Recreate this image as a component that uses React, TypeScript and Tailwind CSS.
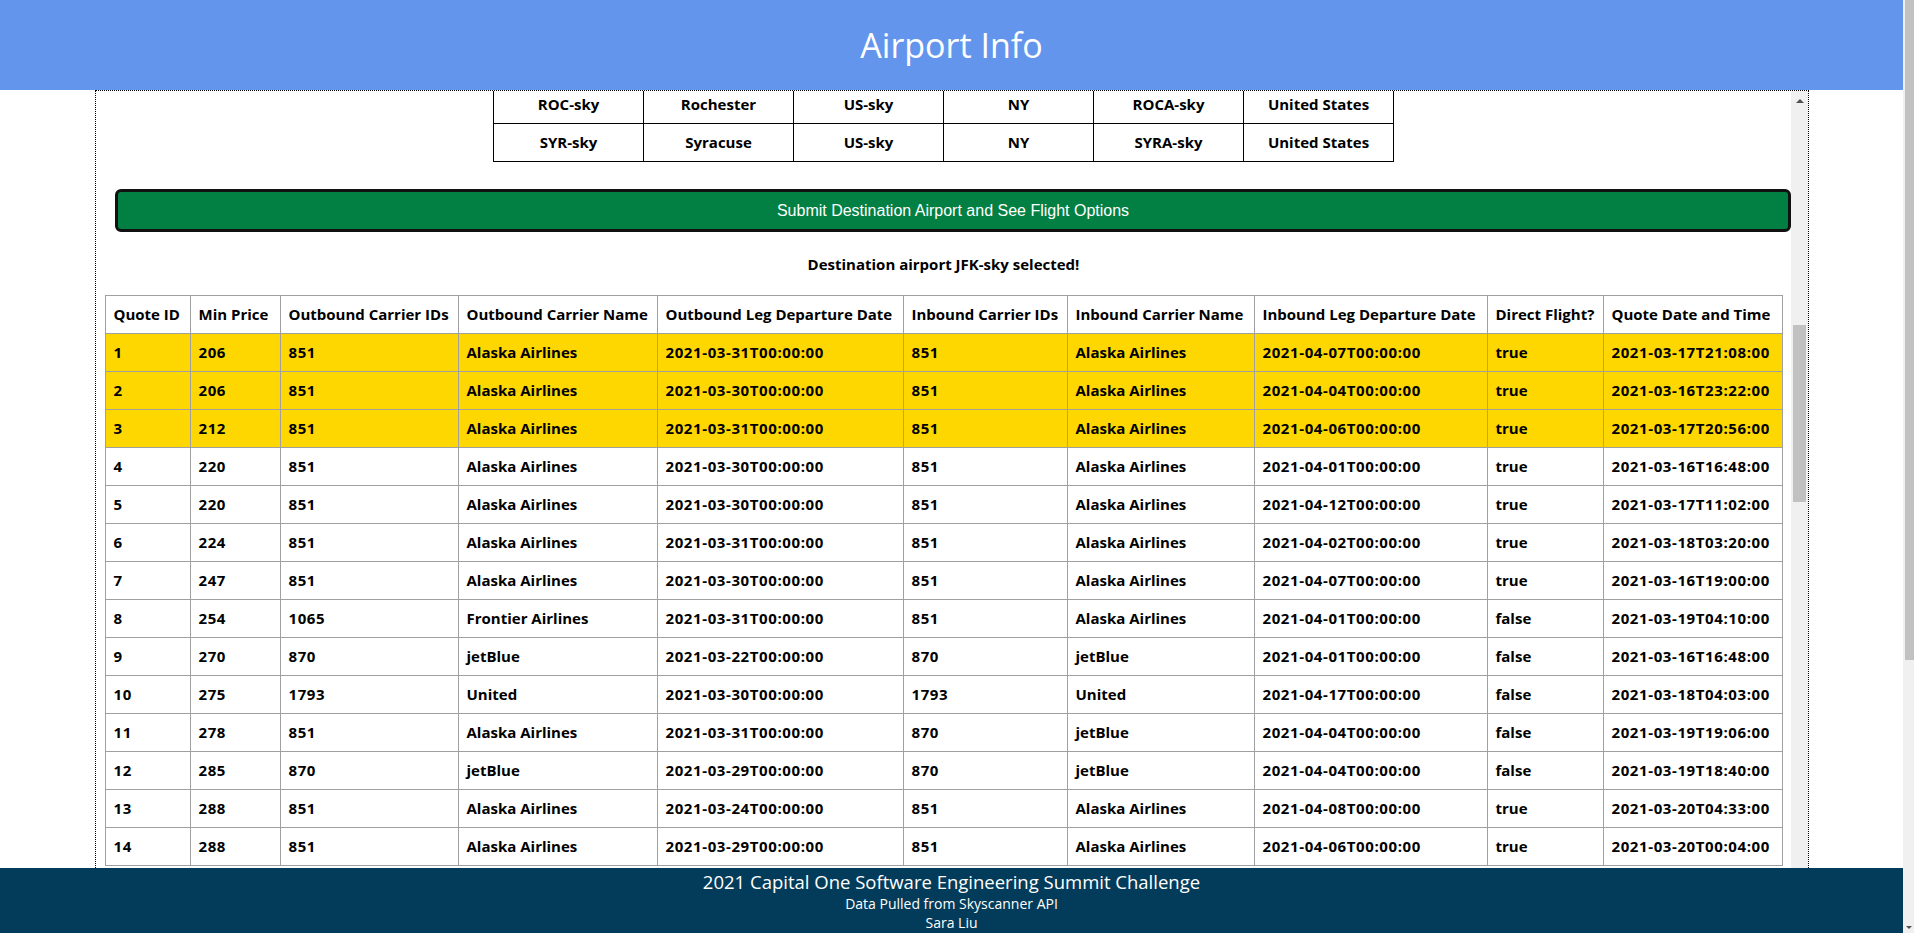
import React from 'react';

type Quote = {
  id: number;
  price: number;
  outIds: string;
  outName: string;
  outDate: string;
  inIds: string;
  inName: string;
  inDate: string;
  direct: boolean;
  quoted: string;
};

const airports = [
  ['ROC-sky', 'Rochester', 'US-sky', 'NY', 'ROCA-sky', 'United States'],
  ['SYR-sky', 'Syracuse', 'US-sky', 'NY', 'SYRA-sky', 'United States'],
];

const headers = [
  'Quote ID',
  'Min Price',
  'Outbound Carrier IDs',
  'Outbound Carrier Name',
  'Outbound Leg Departure Date',
  'Inbound Carrier IDs',
  'Inbound Carrier Name',
  'Inbound Leg Departure Date',
  'Direct Flight?',
  'Quote Date and Time',
];

// column widths measured off the original layout
const colWidths = [85, 90, 178, 199, 246, 164, 187, 233, 116, 179];

const quotes: Quote[] = [
  { id: 1, price: 206, outIds: '851', outName: 'Alaska Airlines', outDate: '2021-03-31T00:00:00', inIds: '851', inName: 'Alaska Airlines', inDate: '2021-04-07T00:00:00', direct: true, quoted: '2021-03-17T21:08:00' },
  { id: 2, price: 206, outIds: '851', outName: 'Alaska Airlines', outDate: '2021-03-30T00:00:00', inIds: '851', inName: 'Alaska Airlines', inDate: '2021-04-04T00:00:00', direct: true, quoted: '2021-03-16T23:22:00' },
  { id: 3, price: 212, outIds: '851', outName: 'Alaska Airlines', outDate: '2021-03-31T00:00:00', inIds: '851', inName: 'Alaska Airlines', inDate: '2021-04-06T00:00:00', direct: true, quoted: '2021-03-17T20:56:00' },
  { id: 4, price: 220, outIds: '851', outName: 'Alaska Airlines', outDate: '2021-03-30T00:00:00', inIds: '851', inName: 'Alaska Airlines', inDate: '2021-04-01T00:00:00', direct: true, quoted: '2021-03-16T16:48:00' },
  { id: 5, price: 220, outIds: '851', outName: 'Alaska Airlines', outDate: '2021-03-30T00:00:00', inIds: '851', inName: 'Alaska Airlines', inDate: '2021-04-12T00:00:00', direct: true, quoted: '2021-03-17T11:02:00' },
  { id: 6, price: 224, outIds: '851', outName: 'Alaska Airlines', outDate: '2021-03-31T00:00:00', inIds: '851', inName: 'Alaska Airlines', inDate: '2021-04-02T00:00:00', direct: true, quoted: '2021-03-18T03:20:00' },
  { id: 7, price: 247, outIds: '851', outName: 'Alaska Airlines', outDate: '2021-03-30T00:00:00', inIds: '851', inName: 'Alaska Airlines', inDate: '2021-04-07T00:00:00', direct: true, quoted: '2021-03-16T19:00:00' },
  { id: 8, price: 254, outIds: '1065', outName: 'Frontier Airlines', outDate: '2021-03-31T00:00:00', inIds: '851', inName: 'Alaska Airlines', inDate: '2021-04-01T00:00:00', direct: false, quoted: '2021-03-19T04:10:00' },
  { id: 9, price: 270, outIds: '870', outName: 'jetBlue', outDate: '2021-03-22T00:00:00', inIds: '870', inName: 'jetBlue', inDate: '2021-04-01T00:00:00', direct: false, quoted: '2021-03-16T16:48:00' },
  { id: 10, price: 275, outIds: '1793', outName: 'United', outDate: '2021-03-30T00:00:00', inIds: '1793', inName: 'United', inDate: '2021-04-17T00:00:00', direct: false, quoted: '2021-03-18T04:03:00' },
  { id: 11, price: 278, outIds: '851', outName: 'Alaska Airlines', outDate: '2021-03-31T00:00:00', inIds: '870', inName: 'jetBlue', inDate: '2021-04-04T00:00:00', direct: false, quoted: '2021-03-19T19:06:00' },
  { id: 12, price: 285, outIds: '870', outName: 'jetBlue', outDate: '2021-03-29T00:00:00', inIds: '870', inName: 'jetBlue', inDate: '2021-04-04T00:00:00', direct: false, quoted: '2021-03-19T18:40:00' },
  { id: 13, price: 288, outIds: '851', outName: 'Alaska Airlines', outDate: '2021-03-24T00:00:00', inIds: '851', inName: 'Alaska Airlines', inDate: '2021-04-08T00:00:00', direct: true, quoted: '2021-03-20T04:33:00' },
  { id: 14, price: 288, outIds: '851', outName: 'Alaska Airlines', outDate: '2021-03-29T00:00:00', inIds: '851', inName: 'Alaska Airlines', inDate: '2021-04-06T00:00:00', direct: true, quoted: '2021-03-20T00:04:00' },
];

const cellFont = "font-['Open_Sans',sans-serif] text-[15px] font-bold leading-[21px] text-black";

// Open Sans digits run a bit narrower than the original font
const isNumeric = (v: string) => /^[\d\-T:]+$/.test(v);

export default function App() {
  return (
    <div className="flex h-[933px] w-full overflow-hidden bg-white">
      <div className="flex min-w-0 flex-1 flex-col">
        {/* Header */}
        <header className="flex h-[90px] shrink-0 items-center justify-center bg-[#6495ed]">
          <h1 className="font-['Open_Sans',sans-serif] text-[34px] font-normal text-white">Airport Info</h1>
        </header>

        {/* Scroll area */}
        <div className="min-h-0 flex-1 pl-[95px] pr-[94px]">
          <div className="flex h-full border-x border-t border-dotted border-black">
            <div className="min-w-0 flex-1 overflow-hidden">
              <div className="-mt-[6px]">
                <table className={`mx-auto table-fixed border-collapse ${cellFont}`}>
                  <tbody>
                    {airports.map((row) => (
                      <tr key={row[0]}>
                        {row.map((c, i) => (
                          <td key={i} className="h-[38px] w-[150px] border border-black px-2 text-center">
                            {c}
                          </td>
                        ))}
                      </tr>
                    ))}
                  </tbody>
                </table>
              </div>

              <button className="mt-[27px] ml-[19px] flex h-[43px] w-[calc(100%-19px)] items-center justify-center rounded-[6px] border-[3px] border-[#111] bg-[#028043] font-['Liberation_Sans',Arial,sans-serif] text-[16px] text-white">
                Submit Destination Airport and See Flight Options
              </button>

              <p className={`mt-[22px] text-center ${cellFont}`}>Destination airport JFK-sky selected!</p>

              <table className={`mx-auto mt-[20px] table-fixed border-collapse whitespace-nowrap ${cellFont}`}>
                <colgroup>
                  {colWidths.map((w, i) => (
                    <col key={i} style={{ width: w }} />
                  ))}
                </colgroup>
                <thead>
                  <tr>
                    {headers.map((h) => (
                      <th key={h} className="h-[38px] border border-[#a0a0a0] px-2 text-left font-bold">
                        {h}
                      </th>
                    ))}
                  </tr>
                </thead>
                <tbody>
                  {quotes.map((q) => {
                    const cells = [
                      String(q.id),
                      String(q.price),
                      q.outIds,
                      q.outName,
                      q.outDate,
                      q.inIds,
                      q.inName,
                      q.inDate,
                      q.direct ? 'true' : 'false',
                      q.quoted,
                    ];
                    return (
                      <tr key={q.id} className={q.id <= 3 ? 'bg-[#ffd700]' : 'bg-white'}>
                        {cells.map((c, i) => (
                          <td
                            key={i}
                            className={`h-[38px] border border-[#a0a0a0] px-2 ${isNumeric(c) ? 'tracking-[0.6px]' : ''}`}
                          >
                            {c}
                          </td>
                        ))}
                      </tr>
                    );
                  })}
                </tbody>
              </table>
            </div>

            {/* inner scrollbar */}
            <div className="flex w-[17px] shrink-0 flex-col items-center bg-[#f0f0f0]">
              <div className="mt-[8px] h-0 w-0 border-x-[4px] border-b-[4px] border-x-transparent border-b-[#505050]" />
              <div className="mt-[222px] h-[177px] w-[13px] bg-[#c1c1c1]" />
            </div>
          </div>
        </div>

        {/* Footer */}
        <footer className="flex h-[65px] shrink-0 flex-col items-center bg-[#033c5a] pt-[1px] font-['Open_Sans',sans-serif] text-white">
          <div className="text-[18.5px] leading-[25px]">2021 Capital One Software Engineering Summit Challenge</div>
          <div className="text-[14px] leading-[19px]">Data Pulled from Skyscanner API</div>
          <div className="text-[14px] leading-[19px]">Sara Liu</div>
        </footer>
      </div>

      {/* page scrollbar */}
      <div className="flex w-[11px] shrink-0 flex-col items-end bg-[#f0f0f0]">
        <div className="h-[660px] w-[9px] bg-[#c1c1c1]" />
        <div className="flex-1" />
        <div className="mb-[4px] mr-[2px] h-0 w-0 border-x-[3px] border-t-[3px] border-x-transparent border-t-[#505050]" />
      </div>
    </div>
  );
}
